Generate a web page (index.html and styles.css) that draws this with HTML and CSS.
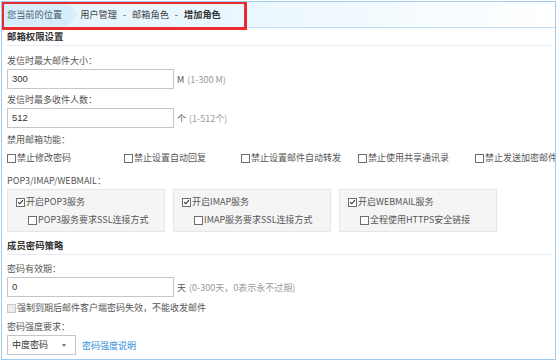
FILE: index.html
```html
<!DOCTYPE html>
<html lang="zh-CN">
<head>
<meta charset="utf-8">
<title>增加角色</title>
<link rel="stylesheet" href="styles.css">
</head>
<body>
<div class="frame">
  <div class="crumbs">
    <span class="here">您当前的位置</span>
    <span class="path">用户管理<span class="sep">-</span>邮箱角色<span class="sep">-</span><b>增加角色</b></span>
  </div>
  <div class="highlight"></div>
  <div class="content">
    <h2 class="sec">邮箱权限设置</h2>
    <div class="lbl l1">发信时最大邮件大小：</div>
    <div class="inrow"><span class="inp">300</span><span class="unit">M</span><span class="hint">(1-300 M)</span></div>
    <div class="lbl">发信时最多收件人数：</div>
    <div class="inrow"><span class="inp">512</span><span class="unit">个</span><span class="hint">(1-512个)</span></div>
    <div class="lbl l3">禁用邮箱功能：</div>
    <div class="cbrow">
      <span class="cb"><i class="box"></i>禁止修改密码</span>
      <span class="cb"><i class="box"></i>禁止设置自动回复</span>
      <span class="cb"><i class="box"></i>禁止设置邮件自动转发</span>
      <span class="cb"><i class="box"></i>禁止使用共享通讯录</span>
      <span class="cb"><i class="box"></i>禁止发送加密邮件</span>
    </div>
    <div class="lbl l4">POP3/IMAP/WEBMAIL：</div>
    <div class="svcs">
      <div class="svc">
        <div class="cb"><i class="box on"><svg viewBox="0 0 8 8"><path d="M1.3 4.2 3.2 6 6.8 1.8"/></svg></i>开启POP3服务</div>
        <div class="cb sub"><i class="box"></i>POP3服务要求SSL连接方式</div>
      </div>
      <div class="svc">
        <div class="cb"><i class="box on"><svg viewBox="0 0 8 8"><path d="M1.3 4.2 3.2 6 6.8 1.8"/></svg></i>开启IMAP服务</div>
        <div class="cb sub"><i class="box"></i>IMAP服务要求SSL连接方式</div>
      </div>
      <div class="svc">
        <div class="cb"><i class="box on"><svg viewBox="0 0 8 8"><path d="M1.3 4.2 3.2 6 6.8 1.8"/></svg></i>开启WEBMAIL服务</div>
        <div class="cb sub"><i class="box"></i>全程使用HTTPS安全链接</div>
      </div>
    </div>
    <h2 class="sec s2">成员密码策略</h2>
    <div class="lbl l5">密码有效期：</div>
    <div class="inrow"><span class="inp">0</span><span class="unit">天</span><span class="hint">(0-300天，0表示永不过期)</span></div>
    <div class="cb force"><i class="box dis"></i>强制到期后邮件客户端密码失效，不能收发邮件</div>
    <div class="lbl l6">密码强度要求：</div>
    <div class="selrow"><span class="sel">中度密码<i class="arrow"></i></span><a class="link" href="#">密码强度说明</a></div>
  </div>
</div>
</body>
</html>
```
FILE: styles.css
```css
* { box-sizing: border-box; margin: 0; padding: 0; }
html, body { background: #fff; }
body {
  padding: 1px 0 0 1px;
  font-family: "Noto Sans CJK SC", "Microsoft YaHei", sans-serif;
  font-size: 9px;
  color: #555;
}
.frame {
  position: relative;
  width: 555px;
  height: 359px;
  border: 1px solid #9ec9f0;
  overflow: hidden;
}
.crumbs {
  height: 26px;
  display: flex;
  align-items: center;
  border-bottom: 1px solid #bfe0f7;
  background: linear-gradient(to right, #e4f4fd 0%, #eaf7fe 45%, #ffffff 100%);
  color: #444;
  font-size: 9.2px;
  padding-bottom: 1px;
}
.here {
  position: relative;
  height: 100%;
  display: flex;
  align-items: center;
  padding: 0 6px 0 5px;
  background: #d6edfb;
  color: #4a5a6a;
}
.here::after {
  content: "";
  position: absolute;
  right: -9px;
  top: 0;
  border-style: solid;
  border-width: 12.5px 0 12.5px 9px;
  border-color: transparent transparent transparent #d6edfb;
}
.path { padding-left: 12px; }
.path b { color: #333; }
.sep { margin: 0 6px; }
.highlight {
  position: absolute;
  left: -1px;
  top: -1px;
  width: 246px;
  height: 29px;
  border: 3px solid #ec2b2f;
}
.content { padding: 0 0 0 5px; }
.sec {
  font-size: 9.4px;
  font-weight: bold;
  color: #333;
  line-height: 16px;
  padding-bottom: 1px;
  border-bottom: 1px solid #e4eef8;
  margin-right: 4px;
}
.lbl { line-height: 16px; margin-top: 3px; }
.l1 { margin-top: 7px; }
.l3 { margin-top: 4px; }
.l4 { margin-top: 7px; }
.l5 { margin-top: 6px; }
.inrow { display: flex; align-items: center; height: 20px; }
.inp {
  width: 167px;
  height: 20px;
  border: 1px solid #c6c6c6;
  padding-left: 4px;
  line-height: 18px;
  color: #333;
  font-family: "Liberation Sans", Arial, sans-serif;
  font-size: 9.5px;
}
.unit { margin-left: 3px; color: #555; }
.hint { margin-left: 3px; color: #999; }
.cbrow {
  display: flex;
  white-space: nowrap;
  margin-top: 2px;
  line-height: 16px;
}
.cbrow .cb { flex: 0 0 117px; }
.cb { display: flex; align-items: center; white-space: nowrap; line-height: 18px; }
.cbrow .cb { line-height: 16px; }
.box {
  flex: none;
  width: 9px;
  height: 9px;
  border: 1px solid #6f6f6f;
  background: #fff;
  margin-right: 1px;
  display: inline-flex;
  align-items: center;
  justify-content: center;
}
.box svg { width: 8px; height: 8px; fill: none; stroke: #333; stroke-width: 1.3; }
.box.dis { border-color: #c8c8c8; background: #ececec; }
.svcs { display: flex; gap: 8px; }
.svc {
  width: 158px;
  height: 43px;
  background: #f5f5f5;
  border: 1px solid #e6e6e6;
  padding: 3px 0 0 8px;
}
.svc .sub { padding-left: 12px; }
.s2 { margin-top: 5px; }
.force { margin-top: 2px; color: #555; }
.l6 { margin-top: 2px; }
.selrow { display: flex; align-items: center; height: 20px; }
.sel {
  position: relative;
  width: 69px;
  height: 20px;
  border: 1px solid #c6c6c6;
  padding-left: 4px;
  line-height: 18px;
  color: #333;
}
.arrow {
  position: absolute;
  right: 9px;
  top: 8px;
  border-style: solid;
  border-width: 3px 2.5px 0 2.5px;
  border-color: #777 transparent transparent transparent;
}
.link { margin-left: 6px; color: #2d8fdc; text-decoration: none; }
```
